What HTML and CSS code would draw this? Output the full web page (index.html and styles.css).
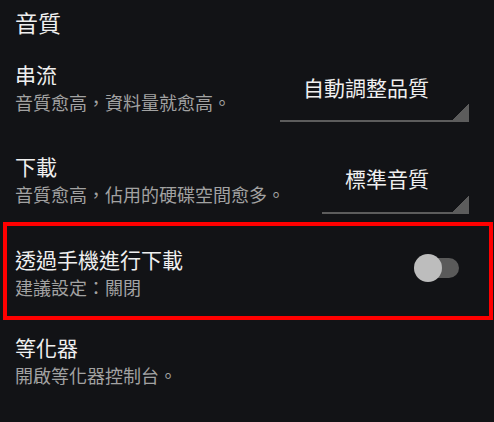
FILE: index.html
```html
<!DOCTYPE html>
<html lang="zh-Hant">
<head>
    <meta charset="UTF-8">
    <meta name="viewport" content="width=device-width, initial-scale=1.0">
    <title>音質設定</title>
    <link rel="stylesheet" href="styles.css">
</head>
<body>
    <h2 class="section-title">音質</h2>

    <div class="pref-row pref-first">
        <div class="pref-text">
            <div class="pref-title">串流</div>
            <div class="pref-summary">音質愈高，資料量就愈高。</div>
        </div>
        <div class="dropdown dropdown-first">自動調整品質</div>
    </div>

    <div class="pref-row pref-second">
        <div class="pref-text">
            <div class="pref-title">下載</div>
            <div class="pref-summary">音質愈高，佔用的硬碟空間愈多。</div>
        </div>
        <div class="dropdown">標準音質</div>
    </div>

    <div class="pref-row pref-highlight">
        <div class="pref-text">
            <div class="pref-title">透過手機進行下載</div>
            <div class="pref-summary">建議設定：關閉</div>
        </div>
        <div class="switch">
            <span class="switch-thumb"></span>
        </div>
    </div>

    <div class="pref-row pref-last">
        <div class="pref-text">
            <div class="pref-title">等化器</div>
            <div class="pref-summary">開啟等化器控制台。</div>
        </div>
    </div>
</body>
</html>
```

FILE: styles.css
```css
* {
    margin: 0;
    padding: 0;
    box-sizing: border-box;
}

:root {
    --bg: #121316;
    --text: #efefef;
    --text-muted: #a2a2a2;
    --line: #5c5c5c;
    --mark: #ff0000;
}

body {
    font-family: "Noto Sans CJK TC", "Noto Sans", sans-serif;
    background: var(--bg);
    color: var(--text);
    min-height: 100vh;
    overflow: hidden;
}

.section-title {
    font-size: 23px;
    font-weight: 400;
    line-height: 28px;
    height: 36px;
    padding: 8px 15px 0;
}

.pref-row {
    display: flex;
    align-items: flex-start;
    justify-content: space-between;
    padding: 0 25px 0 15px;
}

.pref-first {
    padding-top: 24px;
}

.pref-second {
    padding-top: 30px;
}

.pref-text {
    display: flex;
    flex-direction: column;
    gap: 1px;
}

.pref-title {
    font-size: 21px;
    line-height: 28px;
}

.pref-summary {
    font-size: 18px;
    line-height: 26px;
    color: var(--text-muted);
}

/* Spinner con triángulo en la esquina */
.dropdown {
    margin-top: 12px;
    padding: 0 40px 20px 23px;
    font-size: 21px;
    line-height: 28px;
    color: var(--text);
    border-bottom: 2px solid var(--line);
    background: linear-gradient(to bottom right, transparent 50%, var(--line) 50%) no-repeat right bottom / 16px 16px;
}

.dropdown-first {
    margin-top: 13px;
    padding-bottom: 19px;
}

.pref-highlight {
    margin: 8px 1px 0 3px;
    border: 4px solid var(--mark);
    padding: 19px 30px 16px 8px;
}

.switch {
    margin-top: 9px;
    width: 45px;
    height: 28px;
    display: flex;
    align-items: center;
    border-radius: 14px;
    background: linear-gradient(var(--bg), var(--bg)) no-repeat;
    position: relative;
}

.switch::before {
    content: '';
    position: absolute;
    left: 2px;
    right: 0;
    top: 4px;
    height: 20px;
    border-radius: 10px;
    background: #5a5a5a;
}

.switch-thumb {
    width: 28px;
    height: 28px;
    border-radius: 50%;
    background: #bdbdbd;
    position: relative;
    z-index: 1;
}

.pref-last {
    padding-top: 13px;
}
```
